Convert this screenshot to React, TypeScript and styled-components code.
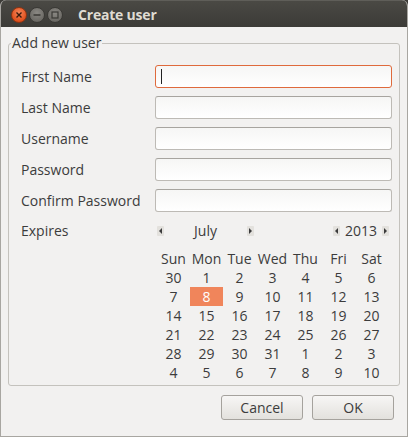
import React from "react";
import styled, { createGlobalStyle } from "styled-components";

const Global = createGlobalStyle`
  html, body { margin: 0; padding: 0; background: #3c3b37; }
  body { font-family: "Open Sans", "Noto Sans", sans-serif; }
  * { box-sizing: border-box; }
`;

const Window = styled.div`
  width: 408px;
  height: 437px;
  background: #f2f1f0;
  border-radius: 6px 6px 0 0;
  overflow: hidden;
  display: flex;
  flex-direction: column;
  border: 1px solid #a8a6a1;
  border-top: none;
`;

const TitleBar = styled.div`
  height: 27px;
  flex: none;
  display: flex;
  align-items: center;
  padding-left: 11px;
  gap: 2px;
  background: linear-gradient(#4a4944, #3c3b37);
  border-top: 1px solid #5f5e59;
  margin: 0 -1px;
`;

const WinButton = styled.div<{ $kind: "close" | "min" | "max" }>`
  width: 16px;
  height: 16px;
  border-radius: 50%;
  margin-top: 2px;
  display: flex;
  align-items: center;
  justify-content: center;
  background: ${(p) =>
    p.$kind === "close"
      ? "radial-gradient(circle at 50% 35%, #f5865a, #e0501d 70%, #b93d12)"
      : "radial-gradient(circle at 50% 35%, #8a8883, #6c6a65 70%, #55534f)"};
  border: 1px solid ${(p) => (p.$kind === "close" ? "#8e3412" : "#3a3935")};
`;

const Title = styled.div`
  margin-left: 13px;
  margin-top: 1px;
  color: #dfdbd2;
  font-weight: 700;
  font-size: 14px;
  letter-spacing: -0.2px;
`;

const Body = styled.div`
  flex: 1;
  display: flex;
  flex-direction: column;
  padding: 8px 7px 0 7px;
`;

const Frame = styled.fieldset`
  margin: 0;
  padding: 0;
  border: 1px solid #c4c2bd;
  border-radius: 3px;
  min-width: 0;
`;

const Legend = styled.legend`
  padding: 0 1px;
  margin-left: 2px;
  font-size: 14px;
  line-height: 16px;
  color: #3c3c3c;
`;

const Form = styled.div`
  display: grid;
  grid-template-columns: 134px 1fr;
  row-gap: 8px;
  padding: 14px 7px 3px 12px;
`;

const Label = styled.div`
  font-size: 14px;
  line-height: 23px;
  color: #3c3c3c;
`;

const Input = styled.div<{ $focused?: boolean }>`
  height: 23px;
  border-radius: 3px;
  border: 1px solid ${(p) => (p.$focused ? "#df6a3c" : "#bdbab5")};
  border-top-color: ${(p) => (p.$focused ? "#df6a3c" : "#a7a49f")};
  background: linear-gradient(#f6f6f5, #ffffff);
  display: flex;
  align-items: center;
  padding-left: 5px;
`;

const Caret = styled.div`
  width: 1px;
  height: 15px;
  background: #222;
`;

const Calendar = styled.div`
  display: flex;
  flex-direction: column;
  margin-left: 2px;
  margin-right: 3px;
  color: #3c3c3c;
  font-size: 14px;
`;

const CalHeader = styled.div`
  height: 22px;
  display: flex;
  align-items: center;
  justify-content: space-between;
`;

const Spinner = styled.div<{ $w: number }>`
  width: ${(p) => p.$w}px;
  display: flex;
  align-items: center;
  justify-content: space-between;
`;

const Arrow = styled.div<{ $dir: "l" | "r" }>`
  width: 7px;
  height: 10px;
  background: #e3e1dd;
  border-radius: 1px;
  display: flex;
  align-items: center;
  justify-content: center;
  &::after {
    content: "";
    width: 0;
    height: 0;
    border-top: 3px solid transparent;
    border-bottom: 3px solid transparent;
    ${(p) =>
      p.$dir === "l"
        ? "border-right: 3px solid #3c3c3c;"
        : "border-left: 3px solid #3c3c3c;"}
  }
`;

const SpinText = styled.div`
  line-height: 22px;
`;

const Grid = styled.div`
  display: grid;
  grid-template-columns: repeat(7, 33px);
  grid-auto-rows: 19px;
  margin-top: 7px;
`;

const DayName = styled.div`
  text-align: center;
  line-height: 19px;
  margin-bottom: 3px;
`;

const Day = styled.div<{ $sel?: boolean }>`
  text-align: center;
  line-height: 19px;
  background: ${(p) => (p.$sel ? "#f0855b" : "transparent")};
  color: ${(p) => (p.$sel ? "#ffffff" : "#3c3c3c")};
`;

const ButtonRow = styled.div`
  display: flex;
  justify-content: flex-end;
  gap: 9px;
  padding: 9px 6px 0 0;
`;

const Button = styled.div`
  width: 82px;
  height: 25px;
  border: 1px solid #a5a29d;
  border-radius: 3px;
  background: linear-gradient(#f7f6f5, #e3e1dd);
  display: flex;
  align-items: center;
  justify-content: center;
  font-size: 14px;
  color: #3c3c3c;
`;

const fields = ["First Name", "Last Name", "Username", "Password", "Confirm Password"];
const dayNames = ["Sun", "Mon", "Tue", "Wed", "Thu", "Fri", "Sat"];
const days = [
  30, 1, 2, 3, 4, 5, 6,
  7, 8, 9, 10, 11, 12, 13,
  14, 15, 16, 17, 18, 19, 20,
  21, 22, 23, 24, 25, 26, 27,
  28, 29, 30, 31, 1, 2, 3,
  4, 5, 6, 7, 8, 9, 10,
];

export default function App() {
  return (
    <>
      <Global />
      <Window>
        <TitleBar>
          <WinButton $kind="close">
            <svg width="8" height="8" viewBox="0 0 8 8">
              <path d="M1.5 1.5 L6.5 6.5 M6.5 1.5 L1.5 6.5" stroke="#3a1a0c" strokeWidth="1.4" />
            </svg>
          </WinButton>
          <WinButton $kind="min">
            <svg width="8" height="8" viewBox="0 0 8 8">
              <path d="M0.5 4 H7.5" stroke="#3a3935" strokeWidth="1.4" />
            </svg>
          </WinButton>
          <WinButton $kind="max">
            <svg width="8" height="8" viewBox="0 0 8 8">
              <rect x="1" y="1" width="6" height="6" fill="none" stroke="#3a3935" strokeWidth="1.2" />
            </svg>
          </WinButton>
          <Title>Create user</Title>
        </TitleBar>
        <Body>
          <Frame>
            <Legend>Add new user</Legend>
            <Form>
              {fields.map((f, i) => (
                <React.Fragment key={f}>
                  <Label>{f}</Label>
                  <Input $focused={i === 0}>{i === 0 && <Caret />}</Input>
                </React.Fragment>
              ))}
              <Label style={{ lineHeight: "22px" }}>Expires</Label>
              <Calendar>
                <CalHeader>
                  <Spinner $w={97}>
                    <Arrow $dir="l" />
                    <SpinText>July</SpinText>
                    <Arrow $dir="r" />
                  </Spinner>
                  <Spinner $w={56}>
                    <Arrow $dir="l" />
                    <SpinText>2013</SpinText>
                    <Arrow $dir="r" />
                  </Spinner>
                </CalHeader>
                <Grid>
                  {dayNames.map((d) => (
                    <DayName key={d}>{d}</DayName>
                  ))}
                  {days.map((d, i) => (
                    <Day key={i} $sel={i === 8}>
                      {d}
                    </Day>
                  ))}
                </Grid>
              </Calendar>
            </Form>
          </Frame>
          <ButtonRow>
            <Button>Cancel</Button>
            <Button>OK</Button>
          </ButtonRow>
        </Body>
      </Window>
    </>
  );
}
